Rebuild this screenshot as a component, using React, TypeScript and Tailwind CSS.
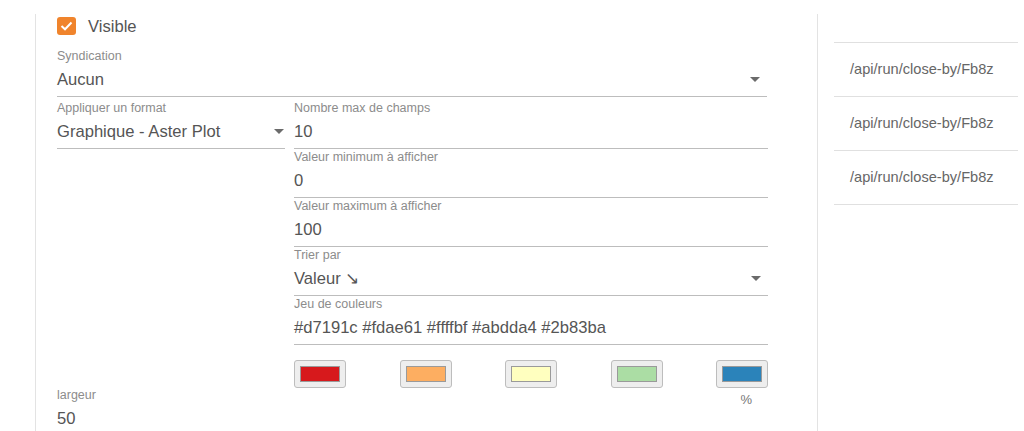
import React from "react";

const Arrow = () => (
  <svg width="10" height="6" viewBox="0 0 10 6" className="shrink-0">
    <path d="M0 0 L10 0 L5 5 Z" fill="#6b6b6b" />
  </svg>
);

function Field({
  label,
  value,
  select,
  arrowPad = "pr-[7px]",
  className = "",
}: {
  label: string;
  value: string;
  select?: boolean;
  arrowPad?: string;
  className?: string;
}) {
  return (
    <div className={"flex flex-col shrink-0 " + className}>
      <div className="h-[16px] shrink-0 leading-[16px] text-[12.5px] text-[#8c8c8c]">{label}</div>
      <div className="h-[32px] shrink-0 flex items-center justify-between border-b border-[#bdbdbd] box-content">
        <span className="text-[16.6px] text-[#555]">{value}</span>
        {select && (
          <span className={arrowPad + " flex items-center"}>
            <Arrow />
          </span>
        )}
      </div>
    </div>
  );
}

function Swatch({ color }: { color: string }) {
  return (
    <div className="w-[52px] h-[28px] rounded-[3px] bg-[#eeeeee] border border-[#bdbdbd] flex items-center justify-center">
      <div className="w-[40px] h-[16px] border border-[#9a9a9a]" style={{ backgroundColor: color }} />
    </div>
  );
}

export default function App() {
  const colors = ["#d7191c", "#fdae61", "#ffffbf", "#abdda4", "#2b83ba"];
  return (
    <div
      className="w-[1024px] h-[431px] bg-white overflow-hidden flex"
      style={{ fontFamily: '"Liberation Sans", Arial, sans-serif' }}
    >
      <div className="ml-[35px] mt-[14px] w-[782px] border-l border-[#e3e3e3] pl-[21px] flex flex-col">
        <div className="h-[34px] shrink-0 flex items-start">
          <div className="mt-[3px] w-[19px] h-[18px] rounded-[3px] bg-[#f0842c] flex items-center justify-center">
            <svg width="13" height="10" viewBox="0 0 13 10">
              <path d="M1.5 5 L5 8.3 L11.5 1.5" stroke="white" strokeWidth="2" fill="none" />
            </svg>
          </div>
          <span className="ml-[12px] mt-[4px] leading-[18px] text-[16.6px] text-[#555]">Visible</span>
        </div>
        <Field label="Syndication" value="Aucun" select className="w-[710px]" />
        <div className="flex shrink-0 w-[711px] gap-[9px] mt-[3px]">
          <Field
            label="Appliquer un format"
            value="Graphique - Aster Plot"
            select
            arrowPad="pr-[1px]"
            className="w-[228px] self-start"
          />
          <div className="flex-1 flex flex-col">
            <Field label="Nombre max de champs" value="10" />
            <Field label="Valeur minimum à afficher" value="0" />
            <Field label="Valeur maximum à afficher" value="100" />
            <Field label="Trier par" value="Valeur ↘" select />
            <Field label="Jeu de couleurs" value="#d7191c #fdae61 #ffffbf #abdda4 #2b83ba" />
            <div className="mt-[15px] shrink-0 flex justify-between">
              {colors.map((c) => (
                <Swatch key={c} color={c} />
              ))}
            </div>
          </div>
        </div>
        <div className="flex shrink-0 w-[711px]">
          <div className="flex flex-col">
            <div className="h-[16px] leading-[16px] text-[12.5px] text-[#8c8c8c] mt-[-1px]">largeur</div>
            <div className="h-[32px] flex items-center text-[16.6px] text-[#555]">50</div>
          </div>
          <div className="ml-auto mr-[16px] mt-[4px] text-[13px] leading-[16px] text-[#777]">%</div>
        </div>
      </div>
      <div className="mt-[14px] border-l border-[#e3e3e3] pl-[16px] w-[201px] flex flex-col">
        <div className="h-[29px] shrink-0 border-b border-[#e0e0e0]" />
        {[0, 1, 2].map((i) => (
          <div
            key={i}
            className="h-[54px] shrink-0 border-b border-[#e0e0e0] flex items-center pl-[16px] text-[14.6px] text-[#666] box-border"
          >
            /api/run/close-by/Fb8z
          </div>
        ))}
      </div>
    </div>
  );
}
